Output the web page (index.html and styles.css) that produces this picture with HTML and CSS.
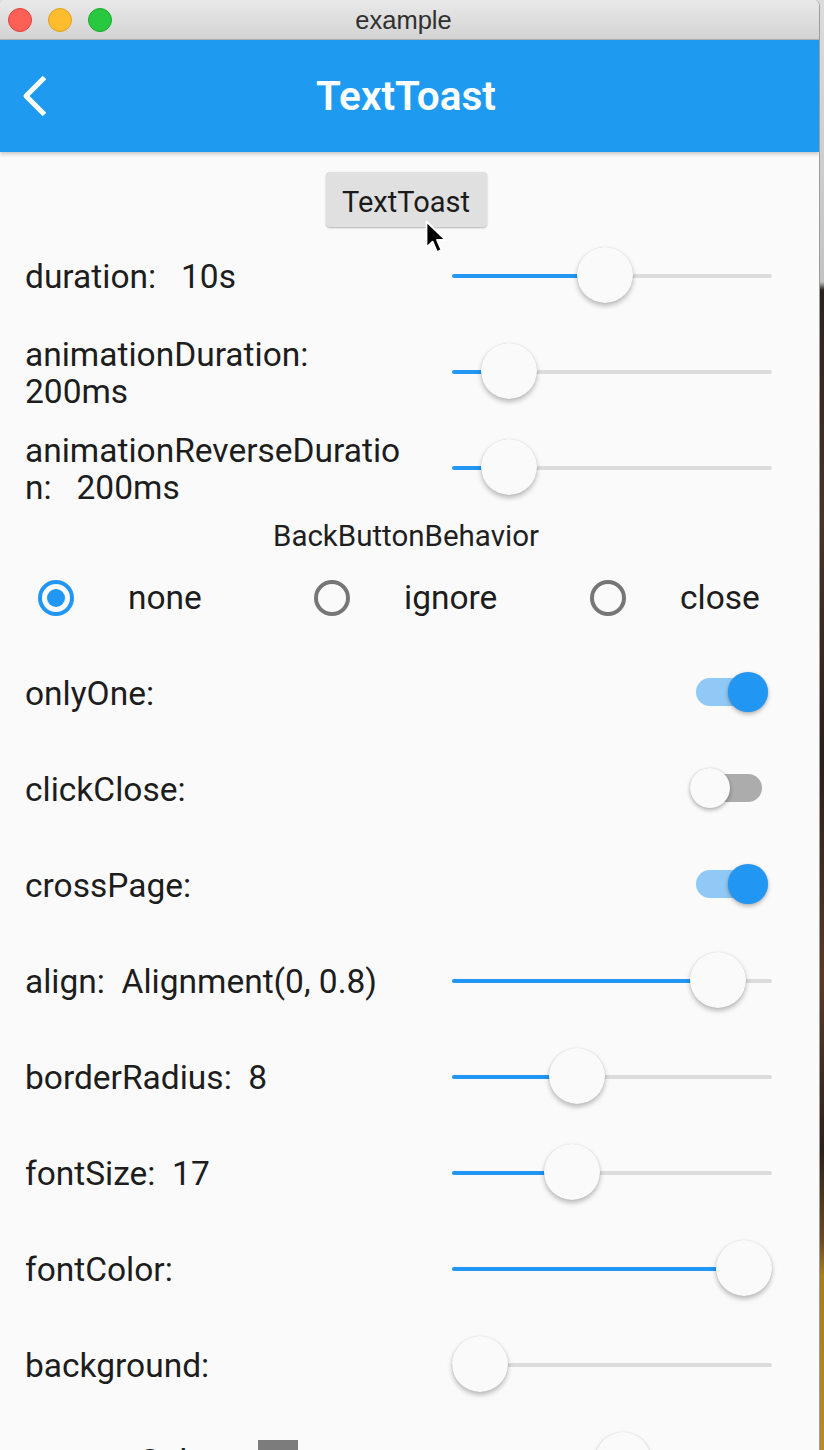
FILE: index.html
```html
<!DOCTYPE html>
<html lang="en">
<head>
<meta charset="utf-8">
<title>example</title>
<link rel="stylesheet" href="styles.css">
</head>
<body>
<div class="window">
  <header class="titlebar">
    <div class="lights">
      <span class="light red"></span>
      <span class="light yellow"></span>
      <span class="light green"></span>
    </div>
    <div class="wintitle">example</div>
    <div></div>
  </header>

  <div class="appbar">
    <svg class="back" width="26" height="42" viewBox="0 0 26 42" aria-hidden="true">
      <polyline points="22.5,2.5 4,21 22.5,39.5" fill="none" stroke="#fff" stroke-width="5" stroke-linejoin="round"/>
    </svg>
    <h1 class="apptitle">TextToast</h1>
    <div></div>
  </div>

  <main class="content">
    <div class="btn-row">
      <button class="btn" type="button">TextToast</button>
      <svg class="cursor" width="24" height="36" viewBox="0 0 24 36" aria-hidden="true">
        <path d="M1.5 1.5 V27.5 L7.6 21.6 L12 32 L16.4 30 L12 19.8 H20.4 Z" fill="#000" stroke="#fff" stroke-width="1.8" stroke-linejoin="round"/>
      </svg>
    </div>

    <div class="row">
      <div class="label">duration:   10s</div>
      <div class="slider" style="--v:0.473"><div class="track"><div class="active"></div></div><div class="thumb"></div></div>
    </div>
    <div class="row">
      <div class="label">animationDuration:<br>200ms</div>
      <div class="slider" style="--v:0.11"><div class="track"><div class="active"></div></div><div class="thumb"></div></div>
    </div>
    <div class="row">
      <div class="label">animationReverseDuratio<br>n:   200ms</div>
      <div class="slider" style="--v:0.11"><div class="track"><div class="active"></div></div><div class="thumb"></div></div>
    </div>

    <div class="section-title">BackButtonBehavior</div>
    <div class="radios">
      <div class="radio-item"><span class="radio on"></span><span class="radio-label">none</span></div>
      <div class="radio-item"><span class="radio"></span><span class="radio-label">ignore</span></div>
      <div class="radio-item"><span class="radio"></span><span class="radio-label">close</span></div>
    </div>

    <div class="row switch-row">
      <div class="label">onlyOne:</div>
      <div class="switch on"><span class="sw-track"></span><span class="sw-thumb"></span></div>
    </div>
    <div class="row switch-row">
      <div class="label">clickClose:</div>
      <div class="switch"><span class="sw-track"></span><span class="sw-thumb"></span></div>
    </div>
    <div class="row switch-row">
      <div class="label">crossPage:</div>
      <div class="switch on"><span class="sw-track"></span><span class="sw-thumb"></span></div>
    </div>

    <div class="row">
      <div class="label">align:  Alignment(0, 0.8)</div>
      <div class="slider" style="--v:0.9"><div class="track"><div class="active"></div></div><div class="thumb"></div></div>
    </div>
    <div class="row">
      <div class="label">borderRadius:  8</div>
      <div class="slider" style="--v:0.367"><div class="track"><div class="active"></div></div><div class="thumb"></div></div>
    </div>
    <div class="row">
      <div class="label">fontSize:  17</div>
      <div class="slider" style="--v:0.348"><div class="track"><div class="active"></div></div><div class="thumb"></div></div>
    </div>
    <div class="row">
      <div class="label">fontColor:</div>
      <div class="slider" style="--v:1"><div class="track"><div class="active"></div></div><div class="thumb"></div></div>
    </div>
    <div class="row">
      <div class="label">background:</div>
      <div class="slider" style="--v:0"><div class="track"><div class="active"></div></div><div class="thumb"></div></div>
    </div>
    <div class="row">
      <div class="label color-label">contentColor:<span class="swatch"></span></div>
      <div class="slider" style="--v:0.54"><div class="track"><div class="active"></div></div><div class="thumb"></div></div>
    </div>
  </main>
</div>
</body>
</html>
```

FILE: styles.css
```css
html, body {
  margin: 0;
  padding: 0;
}

body {
  width: 824px;
  height: 1450px;
  overflow: hidden;
  font-family: Roboto, "Noto Sans", "Liberation Sans", sans-serif;
  color: #1d1d1d;
  background: linear-gradient(to bottom,
    #dcdcdc 0, #c2c2c2 282px,
    #2b221d 290px, #4b3426 520px, #2a1f19 760px,
    #5a3a26 980px, #2c211a 1150px, #6b4a22 1240px,
    #a97b22 1275px, #b88a2c 1450px);
}

.window {
  width: 819px;
  min-height: 1450px;
  background: #fafafa;
  border-right: 1px solid #9d9d9d;
  border-radius: 6px 6px 0 0;
  overflow: hidden;
}

/* ---------- mac title bar ---------- */
.titlebar {
  height: 40px;
  box-sizing: border-box;
  display: grid;
  grid-template-columns: 1fr auto 1fr;
  align-items: center;
  padding-right: 12px;
  background: linear-gradient(to bottom, #e9e9e9, #d3d3d3);
  border-bottom: 1px solid #b3b3b3;
}

.lights {
  display: flex;
  gap: 16px;
  padding-left: 8px;
}

.light {
  width: 24px;
  height: 24px;
  box-sizing: border-box;
  border-radius: 50%;
}

.red { background: #fe5f57; border: 1px solid #e0443e; }
.yellow { background: #febc2e; border: 1px solid #dea123; }
.green { background: #28c840; border: 1px solid #1aab29; }

.wintitle {
  font-family: "Liberation Sans", Roboto, sans-serif;
  font-size: 25.5px;
  color: #303030;
  line-height: 40px;
}

/* ---------- app bar ---------- */
.appbar {
  position: relative;
  z-index: 1;
  height: 112px;
  display: grid;
  grid-template-columns: 1fr auto 1fr;
  align-items: center;
  padding-right: 7px;
  background: #1e9bf0;
  box-shadow: 0 2px 4px rgba(0, 0, 0, 0.22);
}

.back {
  margin-left: 22px;
  display: block;
}

.apptitle {
  margin: 0;
  font-size: 40.5px;
  font-weight: 600;
  color: #fff;
  line-height: 1;
}

/* ---------- content ---------- */
.content {
  width: 812px;
}

.btn-row {
  position: relative;
  height: 75px;
  box-sizing: border-box;
  padding-top: 20px;
  display: flex;
  justify-content: center;
}

.btn {
  width: 161px;
  height: 55px;
  border: none;
  border-radius: 4px;
  background: #e0e0e0;
  box-shadow: 0 1px 2px rgba(0, 0, 0, 0.28);
  font-family: Roboto, "Noto Sans", sans-serif;
  font-size: 29px;
  color: #1b1b1b;
  padding: 5px 0 0;
}

.cursor {
  position: absolute;
  left: 425px;
  top: 68px;
  z-index: 2;
}

.row {
  height: 96px;
  display: flex;
  align-items: center;
  padding-left: 25px;
}

.label {
  flex: 1;
  font-size: 33.5px;
  line-height: 36.5px;
  padding-top: 5px;
  white-space: pre;
}

.color-label {
  display: flex;
  align-items: center;
}

.swatch {
  width: 40px;
  height: 40px;
  margin-left: 32px;
  margin-top: -5px;
  background: #7c7c7c;
}

/* ---------- slider ---------- */
.slider {
  position: relative;
  flex: none;
  width: 320px;
  height: 56px;
  margin-right: 40px;
  display: flex;
  align-items: center;
}

.track {
  flex: 1;
  height: 4px;
  margin-top: 2px;
  background: #dcdcdc;
  border-radius: 2px;
  overflow: hidden;
}

.active {
  height: 100%;
  width: calc(28px + var(--v) * 264px);
  background: #2196f3;
}

.thumb {
  position: absolute;
  top: 0;
  left: calc(var(--v) * 264px);
  width: 56px;
  height: 56px;
  border-radius: 50%;
  background: #fafafa;
  box-shadow: 0 3px 5px rgba(0, 0, 0, 0.26), 0 0 1px rgba(0, 0, 0, 0.18);
}

/* ---------- section title / radios ---------- */
.section-title {
  height: 36px;
  box-sizing: border-box;
  padding-top: 3px;
  line-height: 36px;
  text-align: center;
  font-size: 29.5px;
  color: #1f1f1f;
}

.radios {
  height: 93px;
  display: grid;
  grid-template-columns: repeat(3, 276px);
  align-items: center;
}

.radio-item {
  display: flex;
  align-items: center;
  gap: 54px;
  padding-left: 38px;
}

.radio {
  position: relative;
  width: 36px;
  height: 36px;
  box-sizing: border-box;
  border: 4px solid #767676;
  border-radius: 50%;
}

.radio.on {
  border-color: #2196f3;
}

.radio.on::after {
  content: "";
  position: absolute;
  left: 5px;
  top: 5px;
  width: 18px;
  height: 18px;
  border-radius: 50%;
  background: #2196f3;
}

.radio-label {
  font-size: 33.5px;
  line-height: 36px;
}

/* ---------- switches ---------- */
.switch {
  position: relative;
  flex: none;
  width: 80px;
  height: 40px;
  margin-right: 44px;
  display: flex;
  align-items: center;
}

.sw-track {
  width: 66px;
  height: 28px;
  margin-left: 8px;
  border-radius: 14px;
  background: #acacac;
}

.sw-thumb {
  position: absolute;
  top: 0;
  left: 2px;
  width: 40px;
  height: 40px;
  border-radius: 50%;
  background: #fafafa;
  box-shadow: 0 2px 4px rgba(0, 0, 0, 0.3), 0 0 1px rgba(0, 0, 0, 0.2);
}

.switch.on .sw-track {
  background: #90c9f6;
}

.switch.on .sw-thumb {
  left: 40px;
  background: #2196f3;
}
```
